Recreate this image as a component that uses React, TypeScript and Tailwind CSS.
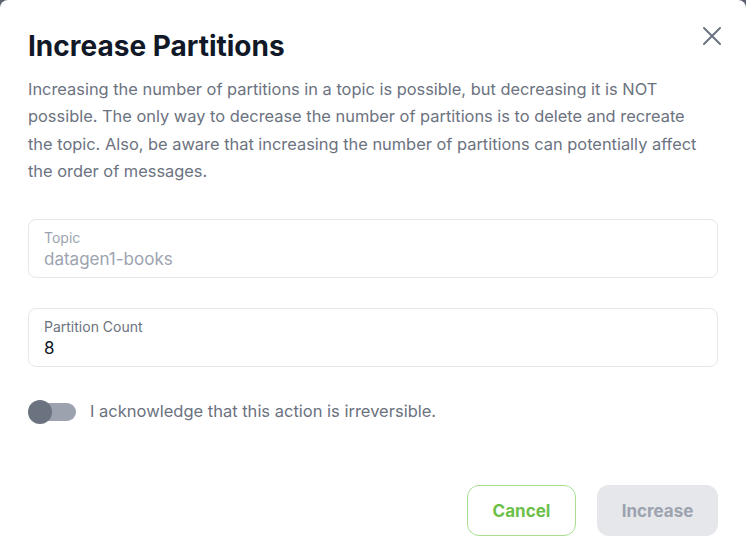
import { useState } from "react";

const CloseIcon = () => (
  <svg width="20" height="20" viewBox="0 0 20 20" fill="none">
    <path d="M2 2L18 18M18 2L2 18" stroke="#6b7280" strokeWidth="2" strokeLinecap="round" />
  </svg>
);

const App = () => {
  const [acknowledged, setAcknowledged] = useState(false);
  const [count, setCount] = useState("8");

  return (
    <div className="min-h-screen w-full bg-[#5b616e]" style={{ fontFamily: "Inter, 'Noto Sans', sans-serif" }}>
      <div className="min-h-[544px] w-full rounded-t-lg bg-white px-7 pt-7 pb-[9px]">
        {/* header */}
        <div className="flex items-start justify-between">
          <h2 className="text-[28px] leading-9 font-bold text-[#111827]">Increase Partitions</h2>
          <button className="-mt-[3px] -mr-[5px] p-[1px]" aria-label="Close">
            <CloseIcon />
          </button>
        </div>

        <p className="mt-3 pr-[10px] text-[16.4px] leading-[27.3px] text-[#6b7280]">
          Increasing the number of partitions in a topic is possible, but decreasing it is NOT
          possible. The only way to decrease the number of partitions is to delete and recreate
          the topic. Also, be aware that increasing the number of partitions can potentially affect
          the order of messages.
        </p>

        <div className="mt-[34px] flex flex-col gap-[30px]">
          <div className="rounded-lg border border-[#e5e7eb] px-[15px] pt-[9px] pb-[6px]">
            <div className="text-[14px] leading-[18px] text-[#9ca3af]">Topic</div>
            <div className="text-[17px] leading-6 text-[#9ca3af]">datagen1-books</div>
          </div>

          <div className="rounded-lg border border-[#e5e7eb] px-[15px] pt-[9px] pb-[6px]">
            <div className="text-[14px] leading-[18px] text-[#6b7280]">Partition Count</div>
            <input
              value={count}
              onChange={(e) => setCount(e.target.value)}
              className="block h-6 w-full text-[17px] leading-6 text-[#111827] outline-none"
            />
          </div>
        </div>

        <label className="mt-[32px] flex cursor-pointer items-center gap-[14px]">
          <button
            onClick={() => setAcknowledged(!acknowledged)}
            className="relative flex h-6 w-12 items-center"
          >
            <span className="ml-[2px] h-[18px] w-[46px] rounded-full bg-[#9ca3af]" />
            <span
              className={`absolute top-0 h-6 w-6 rounded-full bg-[#6b7280] ${acknowledged ? "left-6" : "left-0"}`}
            />
          </button>
          <span className="text-[16.5px] text-[#6b7280]">I acknowledge that this action is irreversible.</span>
        </label>

        <div className="mt-[61px] flex justify-end gap-[21px]">
          <button className="h-[51px] w-[109px] rounded-xl border border-[#a6e08f] pt-[2px] text-[17px] font-bold text-[#6cc04a]">
            Cancel
          </button>
          <button
            disabled={!acknowledged}
            className="h-[51px] w-[121px] rounded-xl bg-[#e5e7eb] pt-[2px] text-[17px] font-bold text-[#9ca3af]"
          >
            Increase
          </button>
        </div>
      </div>
    </div>
  );
};

export default App;
